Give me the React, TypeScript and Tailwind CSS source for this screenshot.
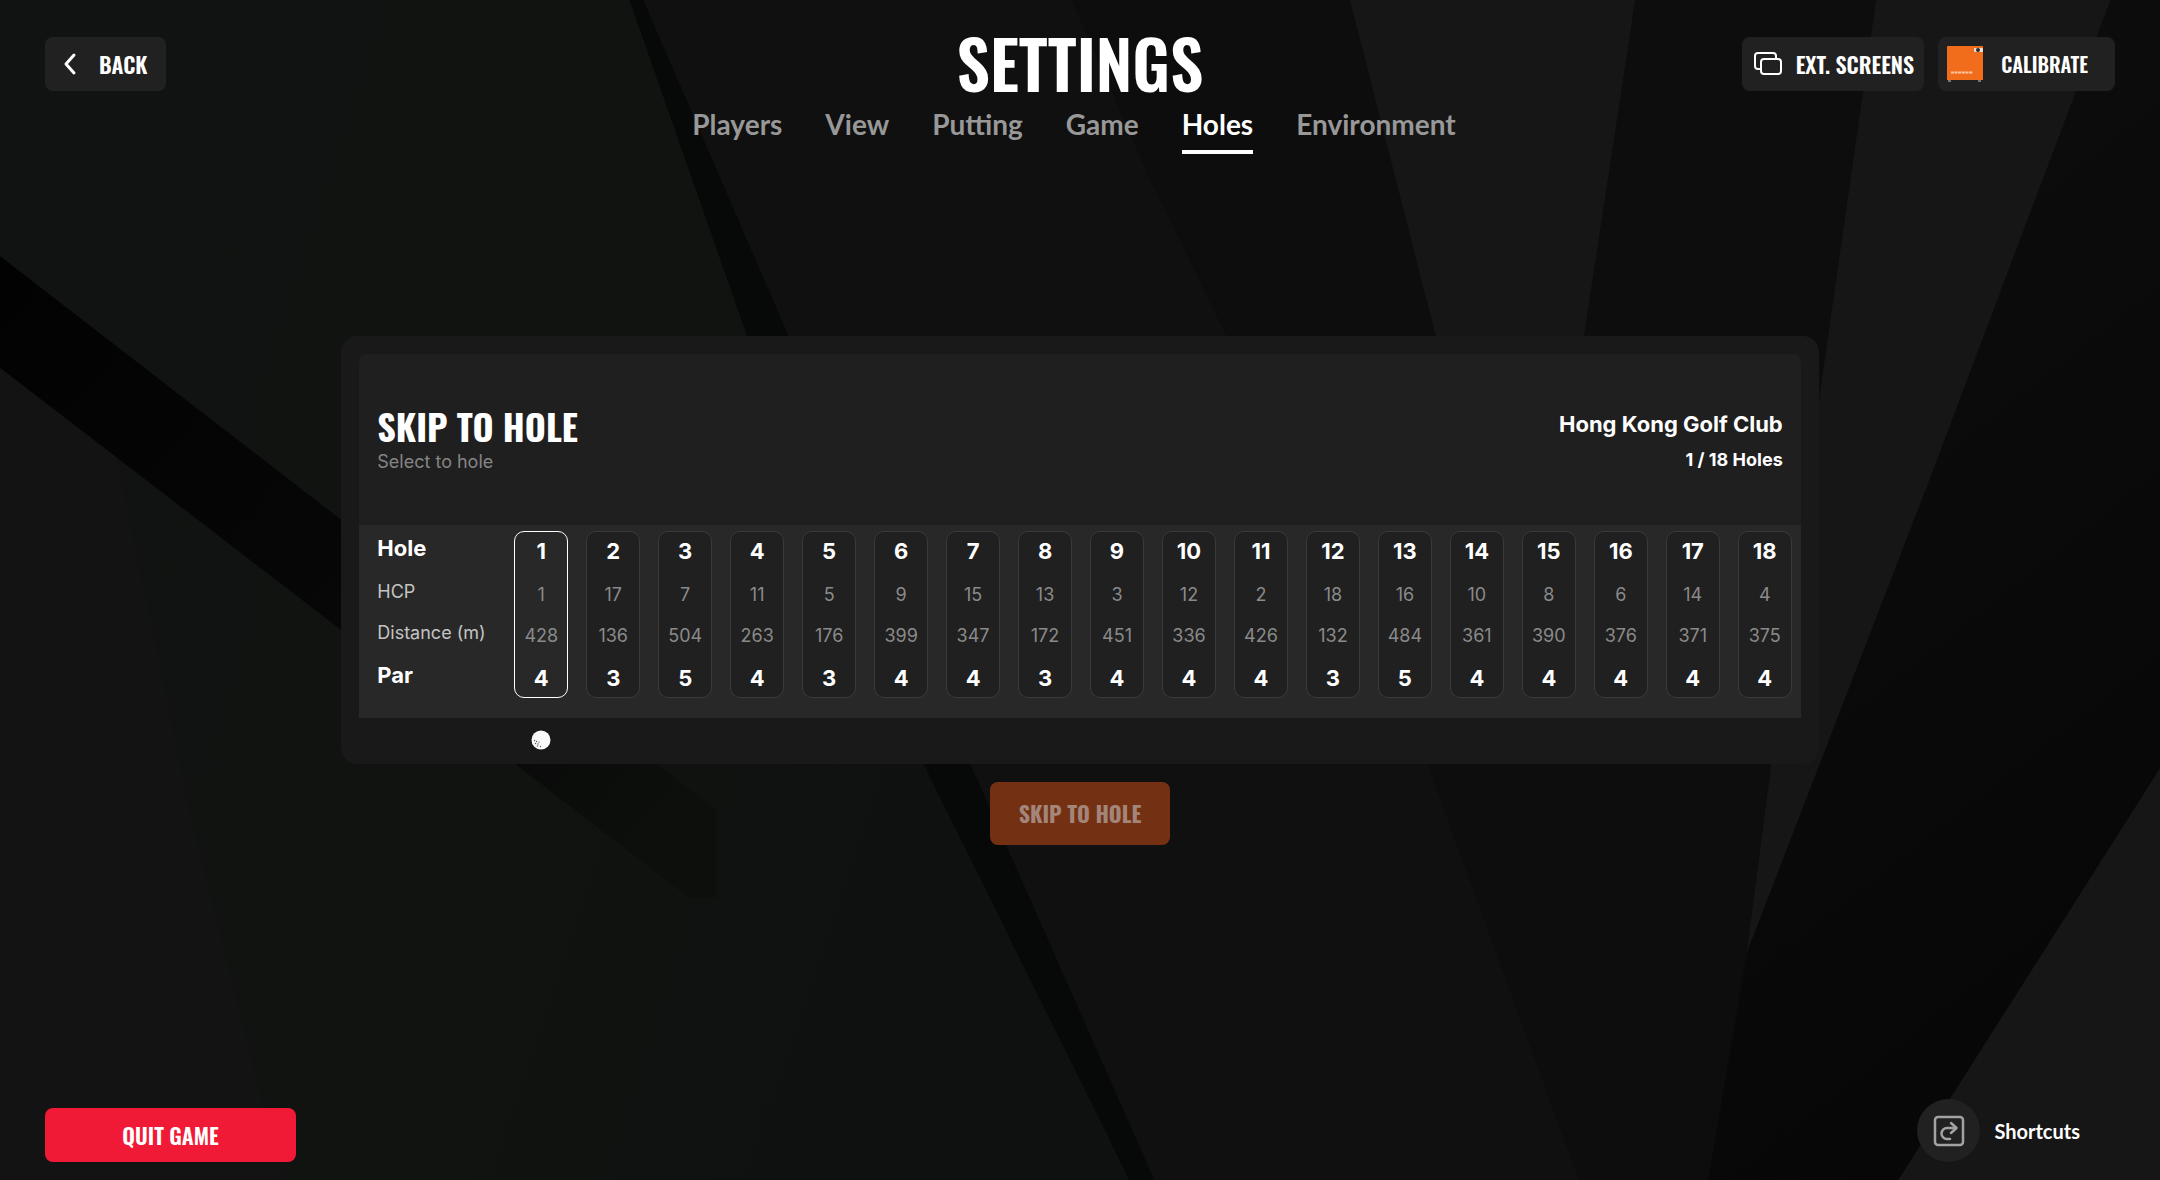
import { useState } from "react";

const tabs = ["Players", "View", "Putting", "Game", "Holes", "Environment"];

const holes = [
  { hcp: 1, distance: 428, par: 4 },
  { hcp: 17, distance: 136, par: 3 },
  { hcp: 7, distance: 504, par: 5 },
  { hcp: 11, distance: 263, par: 4 },
  { hcp: 5, distance: 176, par: 3 },
  { hcp: 9, distance: 399, par: 4 },
  { hcp: 15, distance: 347, par: 4 },
  { hcp: 13, distance: 172, par: 3 },
  { hcp: 3, distance: 451, par: 4 },
  { hcp: 12, distance: 336, par: 4 },
  { hcp: 2, distance: 426, par: 4 },
  { hcp: 18, distance: 132, par: 3 },
  { hcp: 16, distance: 484, par: 5 },
  { hcp: 10, distance: 361, par: 4 },
  { hcp: 8, distance: 390, par: 4 },
  { hcp: 6, distance: 376, par: 4 },
  { hcp: 14, distance: 371, par: 4 },
  { hcp: 4, distance: 375, par: 4 },
];

function Backdrop() {
  return (
    <svg
      className="absolute inset-0 -z-10 h-full w-full"
      viewBox="0 0 1568 857"
      preserveAspectRatio="none"
      aria-hidden="true"
    >
      <defs>
        <linearGradient id="left" x1="0" x2="1" y1="0" y2="0.35">
          <stop offset="0" stopColor="#111312" />
          <stop offset="0.6" stopColor="#101310" />
          <stop offset="1" stopColor="#0f1110" />
        </linearGradient>
        <linearGradient id="band" x1="0" x2="1" y1="0" y2="0.8">
          <stop offset="0" stopColor="#020202" />
          <stop offset="0.7" stopColor="#070807" />
          <stop offset="1" stopColor="#0d0f0d" />
        </linearGradient>
        <linearGradient id="right" x1="0" x2="0.3" y1="0" y2="1">
          <stop offset="0" stopColor="#0e0e0e" />
          <stop offset="1" stopColor="#070707" />
        </linearGradient>
      </defs>
      <rect width="1568" height="857" fill="#0d0d0d" />
      <polygon points="0,0 457,0 542,243 670,554 820,857 0,857" fill="url(#left)" />
      <polygon points="0,267 85,332 140,600 205,857 0,857" fill="#141314" />
      <polygon points="0,186 520,588 520,652 500,652 0,267" fill="url(#band)" />
      <polygon points="457,0 467,0 572,243 704,554 838,857 820,857 670,554 542,243" fill="#070908" />
      <polygon points="467,0 778,0 835,131 890,243 1036,554 1146,857 838,857 704,554 572,243" fill="#101010" />
      <polygon points="980,0 1187,0 1150,243 1120,500 1042,243" fill="#161616" />
      <polygon points="1532,0 1568,0 1568,857 1240,857 1268,692 1400,350" fill="url(#right)" />
      <polygon points="1362,0 1532,0 1400,350 1268,692 1286,554 1322,280" fill="#161616" />
      <polygon points="1568,558 1568,857 1378,857" fill="#161616" />
    </svg>
  );
}

function ChevronIcon() {
  return (
    <svg className="h-6 w-4" viewBox="0 0 16 24" fill="none" stroke="currentColor" strokeWidth="3" aria-hidden="true">
      <path d="M13 3 5 12l8 9" strokeLinecap="round" strokeLinejoin="round" />
    </svg>
  );
}

function ScreensIcon() {
  return (
    <svg className="h-7 w-7" viewBox="0 0 28 28" fill="none" stroke="currentColor" strokeWidth="2" aria-hidden="true">
      <path d="M6.500 19H4a3 3 0 0 1-3-3V6a3 3 0 0 1 3-3h15a3 3 0 0 1 3 3v2" />
      <rect x="7" y="9" width="20" height="15" rx="3" />
    </svg>
  );
}

function LaunchMonitorIcon() {
  return (
    <svg className="h-9 w-9" viewBox="0 0 36 36" aria-hidden="true">
      <rect x="1" y="33" width="3" height="3" fill="#77736f" />
      <rect x="31" y="33" width="3" height="3" fill="#77736f" />
      <rect width="36" height="34" rx="0.500" fill="#f26d1b" />
      <rect x="27" y="2" width="9" height="4" rx="1" fill="#e8e0d8" />
      <circle cx="31" cy="4" r="2" fill="#2b2b2b" />
      <path d="M4 26.500h22" stroke="#f9c7a2" strokeWidth="2" strokeDasharray="3 0.600" />
    </svg>
  );
}

function ShareIcon() {
  return (
    <svg className="h-8 w-8" viewBox="0 0 32 32" fill="none" stroke="#a3a3a3" strokeWidth="2.500" aria-hidden="true">
      <rect x="2" y="2" width="28" height="28" rx="3" />
      <path d="M17 24h-3a5.500 5.500 0 0 1 0-11H23" strokeLinecap="round" />
      <path d="m18 8 5.500 5-5.500 5" strokeLinecap="round" strokeLinejoin="round" />
    </svg>
  );
}

function GolfBall() {
  return (
    <svg className="h-5 w-5" viewBox="0 0 20 20" aria-hidden="true">
      <circle cx="10" cy="10" r="9.500" fill="#fafafa" />
      <g fill="#555">
        <circle cx="3.500" cy="10.500" r="0.700" />
        <circle cx="5.500" cy="11.500" r="0.700" />
        <circle cx="4.500" cy="13.500" r="0.700" />
        <circle cx="7" cy="14" r="0.700" />
        <circle cx="8" cy="12" r="0.600" />
        <circle cx="6.500" cy="16" r="0.700" />
        <circle cx="9.500" cy="16.500" r="0.700" />
      </g>
    </svg>
  );
}

export default function App() {
  const [selected, setSelected] = useState(1);

  return (
    <div className="relative isolate flex min-h-screen flex-col overflow-hidden font-['Inter',sans-serif] text-white">
      <Backdrop />

      <header className="grid grid-cols-[1fr_auto_1fr] items-start px-[45px] pt-7">
        <button className="mt-[9px] flex h-[54px] items-center gap-[22px] justify-self-start rounded-lg bg-[#212121] pr-[18px] pl-4 font-['Oswald',sans-serif] text-[22px] font-semibold">
          <ChevronIcon />
          BACK
        </button>

        <div className="flex flex-col items-center">
          <h1 className="font-['Oswald',sans-serif] text-[66px] leading-[68px] font-semibold">SETTINGS</h1>
          <nav className="mt-2 mr-3 flex gap-[43px] font-['Lato',sans-serif] text-[28px] leading-10 font-bold" aria-label="Settings sections">
            {tabs.map((tab) => (
              <a
                key={tab}
                href={`#${tab.toLowerCase()}`}
                aria-current={tab === "Holes" ? "page" : undefined}
                className="border-b-4 border-transparent pb-[6px] text-[#989898] aria-[current=page]:border-white aria-[current=page]:text-white"
              >
                {tab}
              </a>
            ))}
          </nav>
        </div>

        <div className="mt-[9px] flex gap-[14px] justify-self-end font-['Oswald',sans-serif] font-semibold">
          <button className="flex h-[54px] items-center gap-[14px] rounded-lg bg-[#212121] pr-[10px] pl-3 text-[22px]">
            <ScreensIcon />
            EXT. SCREENS
          </button>
          <button className="flex h-[54px] items-center gap-[18px] rounded-lg bg-[#212121] pr-[27px] pl-[9px] text-xl">
            <LaunchMonitorIcon />
            CALIBRATE
          </button>
        </div>
      </header>

      <main className="mt-[182px] flex flex-col items-center">
        <section className="w-[68.4%] rounded-2xl bg-[#191919] px-[18px] pt-[18px] pb-[14px]">
          <div className="flex h-[171px] items-center justify-between rounded-t-lg bg-[#1f1f1f] px-[18px]">
            <div>
              <h2 className="font-['Oswald',sans-serif] text-4xl leading-11 font-bold">SKIP TO HOLE</h2>
              <p className="text-lg leading-7 text-[#858585]">Select to hole</p>
            </div>
            <div className="pt-1 text-right font-bold">
              <p className="text-[22px] leading-9">Hong Kong Golf Club</p>
              <p className="text-lg leading-9">1 / 18 Holes</p>
            </div>
          </div>

          <div className="flex bg-[#282828] pt-[6px] pr-[9px] pb-5 pl-[18px]">
            <div className="flex w-[137px] shrink-0 flex-col text-lg text-[#c4c4c4]">
              <span className="text-[22px] leading-[34px] font-bold text-white">Hole</span>
              <span className="mt-[6px] leading-[42px]">HCP</span>
              <span className="leading-10">Distance (m)</span>
              <span className="text-[22px] leading-11 font-bold text-white">Par</span>
            </div>
            <div className="grid flex-1 grid-cols-18 gap-[18px]">
              {holes.map((hole, index) => (
                <button
                  key={index}
                  aria-pressed={selected === index + 1}
                  aria-label={`Hole ${index + 1}`}
                  onClick={() => setSelected(index + 1)}
                  className="flex h-[167px] flex-col items-center rounded-[10px] border border-[#3a3a3a] bg-[#202020] text-lg text-[#8a8a8a] aria-pressed:border-white aria-pressed:bg-[#282828]"
                >
                  <span className="text-[22px] leading-[38px] font-bold text-white">{index + 1}</span>
                  <span className="mt-1 leading-[42px]">{hole.hcp}</span>
                  <span className="leading-10">{hole.distance}</span>
                  <span className="text-[22px] leading-11 font-bold text-white">{hole.par}</span>
                </button>
              ))}
            </div>
          </div>

          <div className="mt-3 grid grid-cols-18 gap-[18px] pr-[9px] pl-[155px]">
            {holes.map((_, index) => (
              <div key={index} className="flex h-5 justify-center">
                {selected === index + 1 && <GolfBall />}
              </div>
            ))}
          </div>
        </section>

        <button
          disabled
          className="mt-[18px] h-[63px] w-[180px] rounded-lg bg-[#743012] font-['Oswald',sans-serif] text-[22px] font-bold text-[#a3857a]"
        >
          SKIP TO HOLE
        </button>
      </main>

      <footer className="mt-auto flex items-end justify-between px-[45px] pt-8 pb-[18px]">
        <button className="h-[54px] w-[251px] rounded-lg bg-[#f01a36] font-['Oswald',sans-serif] text-[22px] font-semibold">
          QUIT GAME
        </button>
        <button className="flex items-center gap-[14px] pr-[35px] font-['Lato',sans-serif] text-xl font-bold">
          <span className="flex size-[63px] items-center justify-center rounded-full bg-[#212121]">
            <ShareIcon />
          </span>
          Shortcuts
        </button>
      </footer>
    </div>
  );
}
